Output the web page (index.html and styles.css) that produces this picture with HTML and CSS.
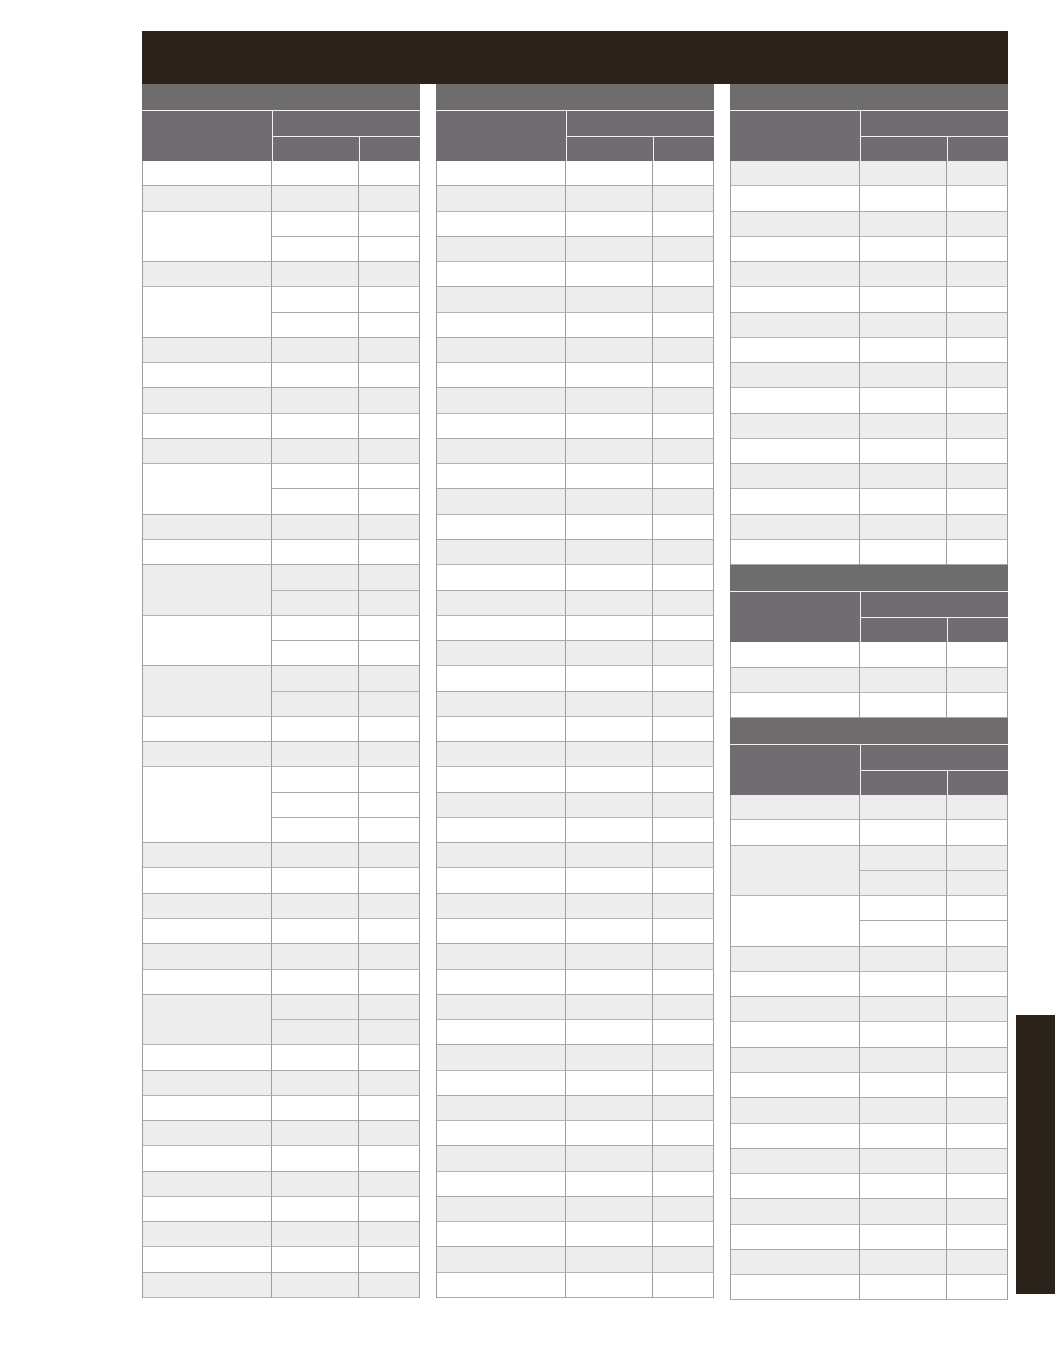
FILE: index.html
```html
<!DOCTYPE html>
<html lang="en">
<head>
<meta charset="utf-8">
<title>Table</title>
<link rel="stylesheet" href="styles.css">
</head>
<body>
<div class="page">
  <div class="banner"></div>
  <div class="cols">
    <!-- column 1 -->
    <div class="col">
      <div class="tbl">
        <div class="title"></div>
        <div class="head"><span class="h1"></span><span class="h2"></span><span class="h3"></span><span class="h4"></span></div>
        <div class="body">
          <div class="r"><span></span><span></span><span></span></div>
          <div class="r z"><span></span><span></span><span></span></div>
          <div class="r s2"><span></span><span></span><span></span><span></span><span></span></div>
          <div class="r z"><span></span><span></span><span></span></div>
          <div class="r s2"><span></span><span></span><span></span><span></span><span></span></div>
          <div class="r z"><span></span><span></span><span></span></div>
          <div class="r"><span></span><span></span><span></span></div>
          <div class="r z"><span></span><span></span><span></span></div>
          <div class="r"><span></span><span></span><span></span></div>
          <div class="r z"><span></span><span></span><span></span></div>
          <div class="r s2"><span></span><span></span><span></span><span></span><span></span></div>
          <div class="r z"><span></span><span></span><span></span></div>
          <div class="r"><span></span><span></span><span></span></div>
          <div class="r z s2"><span></span><span></span><span></span><span></span><span></span></div>
          <div class="r s2"><span></span><span></span><span></span><span></span><span></span></div>
          <div class="r z s2"><span></span><span></span><span></span><span></span><span></span></div>
          <div class="r"><span></span><span></span><span></span></div>
          <div class="r z"><span></span><span></span><span></span></div>
          <div class="r s3"><span></span><span></span><span></span><span></span><span></span><span></span><span></span></div>
          <div class="r z"><span></span><span></span><span></span></div>
          <div class="r"><span></span><span></span><span></span></div>
          <div class="r z"><span></span><span></span><span></span></div>
          <div class="r"><span></span><span></span><span></span></div>
          <div class="r z"><span></span><span></span><span></span></div>
          <div class="r"><span></span><span></span><span></span></div>
          <div class="r z s2"><span></span><span></span><span></span><span></span><span></span></div>
          <div class="r"><span></span><span></span><span></span></div>
          <div class="r z"><span></span><span></span><span></span></div>
          <div class="r"><span></span><span></span><span></span></div>
          <div class="r z"><span></span><span></span><span></span></div>
          <div class="r"><span></span><span></span><span></span></div>
          <div class="r z"><span></span><span></span><span></span></div>
          <div class="r"><span></span><span></span><span></span></div>
          <div class="r z"><span></span><span></span><span></span></div>
          <div class="r"><span></span><span></span><span></span></div>
          <div class="r z"><span></span><span></span><span></span></div>
        </div>
      </div>
    </div>
    <!-- column 2 -->
    <div class="col">
      <div class="tbl">
        <div class="title"></div>
        <div class="head"><span class="h1"></span><span class="h2"></span><span class="h3"></span><span class="h4"></span></div>
        <div class="body">
          <div class="r"><span></span><span></span><span></span></div>
          <div class="r z"><span></span><span></span><span></span></div>
          <div class="r"><span></span><span></span><span></span></div>
          <div class="r z"><span></span><span></span><span></span></div>
          <div class="r"><span></span><span></span><span></span></div>
          <div class="r z"><span></span><span></span><span></span></div>
          <div class="r"><span></span><span></span><span></span></div>
          <div class="r z"><span></span><span></span><span></span></div>
          <div class="r"><span></span><span></span><span></span></div>
          <div class="r z"><span></span><span></span><span></span></div>
          <div class="r"><span></span><span></span><span></span></div>
          <div class="r z"><span></span><span></span><span></span></div>
          <div class="r"><span></span><span></span><span></span></div>
          <div class="r z"><span></span><span></span><span></span></div>
          <div class="r"><span></span><span></span><span></span></div>
          <div class="r z"><span></span><span></span><span></span></div>
          <div class="r"><span></span><span></span><span></span></div>
          <div class="r z"><span></span><span></span><span></span></div>
          <div class="r"><span></span><span></span><span></span></div>
          <div class="r z"><span></span><span></span><span></span></div>
          <div class="r"><span></span><span></span><span></span></div>
          <div class="r z"><span></span><span></span><span></span></div>
          <div class="r"><span></span><span></span><span></span></div>
          <div class="r z"><span></span><span></span><span></span></div>
          <div class="r"><span></span><span></span><span></span></div>
          <div class="r z"><span></span><span></span><span></span></div>
          <div class="r"><span></span><span></span><span></span></div>
          <div class="r z"><span></span><span></span><span></span></div>
          <div class="r"><span></span><span></span><span></span></div>
          <div class="r z"><span></span><span></span><span></span></div>
          <div class="r"><span></span><span></span><span></span></div>
          <div class="r z"><span></span><span></span><span></span></div>
          <div class="r"><span></span><span></span><span></span></div>
          <div class="r z"><span></span><span></span><span></span></div>
          <div class="r"><span></span><span></span><span></span></div>
          <div class="r z"><span></span><span></span><span></span></div>
          <div class="r"><span></span><span></span><span></span></div>
          <div class="r z"><span></span><span></span><span></span></div>
          <div class="r"><span></span><span></span><span></span></div>
          <div class="r z"><span></span><span></span><span></span></div>
          <div class="r"><span></span><span></span><span></span></div>
          <div class="r z"><span></span><span></span><span></span></div>
          <div class="r"><span></span><span></span><span></span></div>
          <div class="r z"><span></span><span></span><span></span></div>
          <div class="r"><span></span><span></span><span></span></div>
        </div>
      </div>
    </div>
    <!-- column 3 -->
    <div class="col">
      <div class="tbl">
        <div class="title"></div>
        <div class="head"><span class="h1"></span><span class="h2"></span><span class="h3"></span><span class="h4"></span></div>
        <div class="body">
          <div class="r z"><span></span><span></span><span></span></div>
          <div class="r"><span></span><span></span><span></span></div>
          <div class="r z"><span></span><span></span><span></span></div>
          <div class="r"><span></span><span></span><span></span></div>
          <div class="r z"><span></span><span></span><span></span></div>
          <div class="r"><span></span><span></span><span></span></div>
          <div class="r z"><span></span><span></span><span></span></div>
          <div class="r"><span></span><span></span><span></span></div>
          <div class="r z"><span></span><span></span><span></span></div>
          <div class="r"><span></span><span></span><span></span></div>
          <div class="r z"><span></span><span></span><span></span></div>
          <div class="r"><span></span><span></span><span></span></div>
          <div class="r z"><span></span><span></span><span></span></div>
          <div class="r"><span></span><span></span><span></span></div>
          <div class="r z"><span></span><span></span><span></span></div>
          <div class="r"><span></span><span></span><span></span></div>
        </div>
      </div>
      <div class="tbl">
        <div class="title"></div>
        <div class="head"><span class="h1"></span><span class="h2"></span><span class="h3"></span><span class="h4"></span></div>
        <div class="body">
          <div class="r"><span></span><span></span><span></span></div>
          <div class="r z"><span></span><span></span><span></span></div>
          <div class="r"><span></span><span></span><span></span></div>
        </div>
      </div>
      <div class="tbl">
        <div class="title"></div>
        <div class="head"><span class="h1"></span><span class="h2"></span><span class="h3"></span><span class="h4"></span></div>
        <div class="body">
          <div class="r z"><span></span><span></span><span></span></div>
          <div class="r"><span></span><span></span><span></span></div>
          <div class="r z s2"><span></span><span></span><span></span><span></span><span></span></div>
          <div class="r s2"><span></span><span></span><span></span><span></span><span></span></div>
          <div class="r z"><span></span><span></span><span></span></div>
          <div class="r"><span></span><span></span><span></span></div>
          <div class="r z"><span></span><span></span><span></span></div>
          <div class="r"><span></span><span></span><span></span></div>
          <div class="r z"><span></span><span></span><span></span></div>
          <div class="r"><span></span><span></span><span></span></div>
          <div class="r z"><span></span><span></span><span></span></div>
          <div class="r"><span></span><span></span><span></span></div>
          <div class="r z"><span></span><span></span><span></span></div>
          <div class="r"><span></span><span></span><span></span></div>
          <div class="r z"><span></span><span></span><span></span></div>
          <div class="r"><span></span><span></span><span></span></div>
          <div class="r z"><span></span><span></span><span></span></div>
          <div class="r"><span></span><span></span><span></span></div>
        </div>
      </div>
    </div>
  </div>
  <div class="tab"></div>
</div>
</body>
</html>
```

FILE: styles.css
```css
html, body {
  margin: 0;
  padding: 0;
  background: #ffffff;
  font-family: "Liberation Sans", Arial, sans-serif;
}

.page {
  position: relative;
  width: 1055px;
  min-height: 1369px;
  box-sizing: border-box;
  padding: 31px 0 0 142px;
}

.banner {
  width: 866px;
  height: 53px;
  background: #2b231a;
}

.cols {
  display: flex;
  gap: 16px;
  align-items: flex-start;
}

.col {
  width: 278px;
  display: flex;
  flex-direction: column;
}

.title {
  height: 26px;
  background: #6f6c6e;
}

.head {
  display: grid;
  grid-template-columns: 130px 87px 1fr;
  grid-template-rows: 25px 25px;
  background: #716c71;
  border-top: 1px solid #f2f2f2;
}

.head span {
  display: block;
  box-sizing: border-box;
}

.h1 {
  grid-row: 1 / span 2;
  grid-column: 1;
}

.h2 {
  grid-row: 1;
  grid-column: 2 / span 2;
  border-left: 1px solid #f2f2f2;
}

.h3 {
  grid-row: 2;
  grid-column: 2;
  border-left: 1px solid #f2f2f2;
  border-top: 1px solid #f2f2f2;
}

.h4 {
  grid-row: 2;
  grid-column: 3;
  border-left: 1px solid #f2f2f2;
  border-top: 1px solid #f2f2f2;
}

.body {
  border-left: 1px solid #9d9d9d;
}

.r {
  display: grid;
  grid-template-columns: 129px 87px 1fr;
  grid-auto-rows: 25.27px;
  background: #ffffff;
}

.r.z {
  background: #ededed;
}

.r span {
  display: block;
  box-sizing: border-box;
  border-right: 1px solid #9d9d9d;
  border-bottom: 1px solid #a9a9a9;
}

.r.z span {
  border-bottom-color: #b4b4b4;
}

.r.s2 span:first-child {
  grid-row: span 2;
}

.r.s3 span:first-child {
  grid-row: span 3;
}

.tab {
  position: absolute;
  left: 1016px;
  top: 1015px;
  width: 39px;
  height: 279px;
  background: #2b231a;
}
```
